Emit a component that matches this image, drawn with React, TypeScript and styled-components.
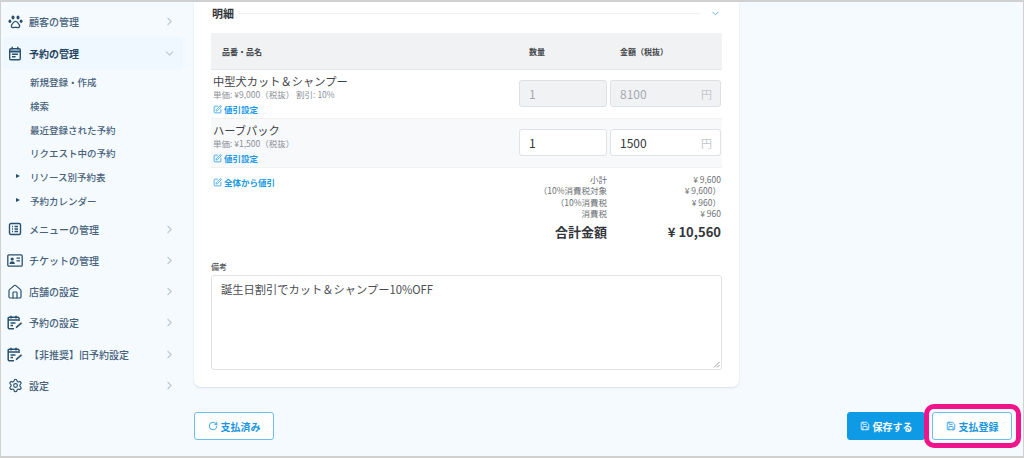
import React from "react";
import styled, { createGlobalStyle } from "styled-components";
import {
  ChevronRight,
  ChevronDown,
  Home,
  Settings,
  SquarePen,
  Save,
  RotateCw,
} from "lucide-react";

const GlobalStyle = createGlobalStyle`
  html, body {
    margin: 0;
    padding: 0;
    background: #fff;
  }
  * { box-sizing: border-box; }
`;

const Frame = styled.div`
  width: 1024px;
  height: 458px;
  overflow: hidden;
  position: relative;
  display: flex;
  background: #f5faff;
  border-top: 2px solid #d0d0d0;
  border-left: 1px solid #d0d0d0;
  border-right: 1px solid #d0d0d0;
  border-bottom: 2px solid #d0d0d0;
  font-family: "Noto Sans CJK JP", "Noto Sans", sans-serif;
  color: #3c3f44;
`;

const Sidebar = styled.nav`
  width: 193px;
  flex: none;
  padding-top: 4px;
  padding-left: 1px;
  display: flex;
  flex-direction: column;
`;

const MenuRow = styled.div<{ $active?: boolean }>`
  width: 181px;
  height: ${(p) => (p.$active ? "32px" : "31.3px")};
  display: flex;
  align-items: center;
  padding-left: 5px;
  border-radius: 4px;
  background: ${(p) => (p.$active ? "#eff8ff" : "transparent")};
  color: ${(p) => (p.$active ? "#24445f" : "#47627a")};
  font-size: 10px;
  font-weight: ${(p) => (p.$active ? 700 : 500)};
`;

const MenuIcon = styled.span`
  width: 16px;
  height: 16px;
  margin-right: 6px;
  color: #28506e;
  display: flex;
  align-items: center;
  justify-content: center;
  flex: none;
`;

const MenuLabel = styled.span`
  flex: 1;
  white-space: nowrap;
`;

const MenuArrow = styled.span`
  color: #bcc8d1;
  display: flex;
  margin-right: 7px;
`;

const SubList = styled.div`
  display: flex;
  flex-direction: column;
  padding: 1px 0 1px;
`;

const SubItem = styled.div`
  height: 23.7px;
  display: flex;
  align-items: center;
  padding-left: 28px;
  position: relative;
  font-size: 9.5px;
  font-weight: 500;
  color: #47627a;
`;

const Caret = styled.span`
  position: absolute;
  left: 14px;
  top: 9px;
  border-left: 4px solid #28506e;
  border-top: 2.5px solid transparent;
  border-bottom: 2.5px solid transparent;
`;

const Main = styled.main`
  flex: 1;
  display: flex;
  flex-direction: column;
  min-width: 0;
`;

const Card = styled.section`
  width: 545px;
  height: 385px;
  background: #fff;
  border-radius: 0 0 7px 7px;
  box-shadow: 0 1px 2px rgba(40, 70, 100, 0.14);
  padding: 0 17px 0 17px;
  display: flex;
  flex-direction: column;
`;

const SectionHead = styled.div`
  height: 31px;
  display: flex;
  align-items: center;
  padding-bottom: 9px;
  font-size: 11px;
  font-weight: 700;
  color: #33363a;
  gap: 5px;
  padding-left: 1px;
`;

const SectionRule = styled.div`
  flex: 1;
  height: 1px;
  background: #eef0f2;
`;

const SectionToggle = styled.span`
  color: #5aaee8;
  display: flex;
  margin: 0 1px 0 5px;
`;

const columns = "308px 91px 112px";

const TableHead = styled.div`
  display: grid;
  grid-template-columns: ${columns};
  height: 37px;
  align-items: center;
  background: #f1f2f4;
  border-bottom: 1px solid #e4e6e9;
  font-size: 8px;
  font-weight: 700;
  color: #44474b;
`;

const HeadCell = styled.div<{ $pad: number }>`
  padding-left: ${(p) => p.$pad}px;
`;

const ItemRow = styled.div<{ $shaded?: boolean }>`
  display: grid;
  grid-template-columns: ${columns};
  height: 49px;
  background: ${(p) => (p.$shaded ? "#f8f9fb" : "#fff")};
  border-bottom: 1px solid #f0f1f3;
`;

const ItemInfo = styled.div`
  padding: 3px 0 0 2px;
  display: flex;
  flex-direction: column;
`;

const ItemName = styled.div`
  font-size: 11.25px;
  line-height: 16px;
  color: #3f4246;
`;

const ItemMeta = styled.div`
  font-size: 8.5px;
  line-height: 11px;
  color: #8b9096;
  white-space: nowrap;
  margin-bottom: 1px;
`;

const EditLink = styled.div`
  display: flex;
  align-items: center;
  gap: 2px;
  height: 14px;
  font-size: 8.5px;
  font-weight: 700;
  color: #1b9ae6;
  white-space: nowrap;
  margin-top: 1px;
`;

const FieldCell = styled.div`
  padding: 10px 0 0 0;
  display: flex;
  justify-content: flex-start;
`;

const Field = styled.div<{ $disabled?: boolean; $w: number }>`
  width: ${(p) => p.$w}px;
  height: 27px;
  border-radius: 3px;
  border: 1px solid ${(p) => (p.$disabled ? "#dde0e4" : "#dfe2e6")};
  background: ${(p) => (p.$disabled ? "#f1f2f4" : "#fff")};
  color: ${(p) => (p.$disabled ? "#a4a9af" : "#33363a")};
  display: flex;
  align-items: center;
  justify-content: space-between;
  padding: 0 8px 0 9px;
  font-size: 12px;
`;

const Unit = styled.span`
  color: #c2c6cb;
  font-size: 11px;
`;

const SummaryWrap = styled.div`
  display: flex;
  justify-content: space-between;
  padding: 6px 1px 0 2px;
  height: 87px;
`;

const Summary = styled.div`
  display: flex;
  flex-direction: column;
  width: 210px;
  margin-top: -1px;
`;

const SummaryRow = styled.div<{ $total?: boolean }>`
  display: grid;
  grid-template-columns: 96px 1fr;
  justify-content: space-between;
  height: ${(p) => (p.$total ? "27px" : "11.3px")};
  align-items: center;
  text-align: right;
  font-size: ${(p) => (p.$total ? "13px" : "8.5px")};
  font-weight: ${(p) => (p.$total ? 700 : 400)};
  color: ${(p) => (p.$total ? "#33363a" : "#6c7176")};
  white-space: nowrap;
`;

const NoteLabel = styled.div`
  font-size: 8px;
  font-weight: 500;
  color: #55595e;
  line-height: 12px;
  margin-top: 6px;
  margin-bottom: 2px;
`;

const NoteBox = styled.div`
  position: relative;
  height: 95px;
  width: 511px;
  border: 1px solid #e0e3e6;
  border-radius: 3px;
  padding: 4px 9px;
  font-size: 11.25px;
  line-height: 18px;
  color: #4a4d52;
`;

const ResizeGrip = styled.svg`
  position: absolute;
  right: 1px;
  bottom: 1px;
`;

const Footer = styled.div`
  width: 818px;
  display: flex;
  justify-content: space-between;
  align-items: center;
  padding-top: 25px;
`;

const ButtonGroup = styled.div`
  display: flex;
  gap: 7px;
`;

const Button = styled.div<{ $solid?: boolean; $w: number }>`
  width: ${(p) => p.$w}px;
  height: 28px;
  border-radius: 3px;
  display: flex;
  align-items: center;
  justify-content: center;
  gap: 3px;
  font-size: 10px;
  font-weight: 700;
  background: ${(p) => (p.$solid ? "#0f9ae6" : "#fff")};
  color: ${(p) => (p.$solid ? "#fff" : "#1b96e2")};
  border: 1px solid ${(p) => (p.$solid ? "#0f9ae6" : "#6cbdf0")};
`;

const Highlight = styled.div`
  position: absolute;
  left: 923px;
  top: 402px;
  width: 97px;
  height: 44px;
  border: 5px solid #f0148c;
  border-radius: 10px;
  pointer-events: none;
`;

// drawn by hand, lucide's versions are too thin or have other shapes
const PawIcon = () => (
  <svg width="15" height="14" viewBox="0 0 15 14" fill="currentColor">
    <ellipse cx="5" cy="2.6" rx="1.5" ry="2" />
    <ellipse cx="10" cy="2.6" rx="1.5" ry="2" />
    <ellipse cx="1.9" cy="6.2" rx="1.4" ry="1.8" />
    <ellipse cx="13.1" cy="6.2" rx="1.4" ry="1.8" />
    <path
      d="M7.5 6.4c1.6 0 2.4 1.3 3.2 2.5.8 1 1.2 1.6.9 2.6-.3.9-1.2 1.3-2.3 1.1-.7-.1-1.2-.3-1.8-.3s-1.1.2-1.8.3c-1.1.2-2-.2-2.3-1.1-.3-1 .1-1.6.9-2.6.8-1.2 1.6-2.5 3.2-2.5z"
      fill="none"
      stroke="currentColor"
      strokeWidth="1.3"
    />
  </svg>
);

const CalendarIcon = () => (
  <svg width="14" height="15" viewBox="0 0 14 15" fill="none" stroke="currentColor" strokeWidth="1.4">
    <rect x="1.7" y="2.7" width="10.6" height="11" rx="1.3" />
    <path d="M1.7 5.5h10.6" strokeWidth="2" />
    <path d="M4.2.8v2.6M9.8.8v2.6M4 8.2h6M4 10.8h3.6" />
  </svg>
);

const MenuListIcon = () => (
  <svg width="14" height="14" viewBox="0 0 14 14" fill="none" stroke="currentColor" strokeWidth="1.4">
    <rect x="1.5" y="1.5" width="11" height="11" rx="1.5" />
    <path d="M4 4.5h1M4 7h1M4 9.5h1M6.5 4.5H10M6.5 7H10M6.5 9.5H10" />
  </svg>
);

const TicketIcon = () => (
  <svg width="16" height="13" viewBox="0 0 16 13" fill="none" stroke="currentColor" strokeWidth="1.3">
    <rect x="0.8" y="0.8" width="14.4" height="11.4" rx="1.2" />
    <circle cx="5.2" cy="5" r="1.6" fill="currentColor" stroke="none" />
    <path d="M2.6 10c0-1.8 1.2-2.7 2.6-2.7s2.6.9 2.6 2.7z" fill="currentColor" stroke="none" />
    <path d="M9.5 4.2h3.5M9.5 6.8h3.5" />
  </svg>
);

const CalendarEditIcon = () => (
  <svg width="16" height="15" viewBox="0 0 16 15" fill="none" stroke="currentColor" strokeWidth="1.5">
    <path d="M12 6V3.2a1 1 0 0 0-1-1H2.2a1 1 0 0 0-1 1v9.6a1 1 0 0 0 1 1H7" />
    <path d="M4 .8v2.6M9 .8v2.6M1.5 5h10M3.5 8h5M3.5 10.6h2.5" />
    <path d="M8.6 13.6l.5-2 5-4.4 1 1.2-5 4.4z" fill="currentColor" stroke="none" />
  </svg>
);

const subItems = [
  { label: "新規登録・作成" },
  { label: "検索" },
  { label: "最近登録された予約" },
  { label: "リクエスト中の予約" },
  { label: "リソース別予約表", caret: true },
  { label: "予約カレンダー", caret: true },
];

const lowerMenu = [
  { label: "メニューの管理", icon: <MenuListIcon /> },
  { label: "チケットの管理", icon: <TicketIcon /> },
  { label: "店舗の設定", icon: <Home size={16} strokeWidth={1.8} /> },
  { label: "予約の設定", icon: <CalendarEditIcon /> },
  { label: "【非推奨】旧予約設定", icon: <CalendarEditIcon /> },
  { label: "設定", icon: <Settings size={15} strokeWidth={1.8} /> },
];

const summaryRows = [
  ["小計", "¥ 9,600"],
  ["（10%消費税対象", "¥ 9,600）"],
  ["（10%消費税", "¥ 960）"],
  ["消費税", "¥ 960"],
];

const App = () => {
  return (
    <Frame>
      <GlobalStyle />
      <Sidebar>
        <MenuRow>
          <MenuIcon>
            <PawIcon />
          </MenuIcon>
          <MenuLabel>顧客の管理</MenuLabel>
          <MenuArrow>
            <ChevronRight size={13} />
          </MenuArrow>
        </MenuRow>
        <MenuRow $active>
          <MenuIcon>
            <CalendarIcon />
          </MenuIcon>
          <MenuLabel>予約の管理</MenuLabel>
          <MenuArrow>
            <ChevronDown size={13} />
          </MenuArrow>
        </MenuRow>
        <SubList>
          {subItems.map((item) => (
            <SubItem key={item.label}>
              {item.caret && <Caret />}
              {item.label}
            </SubItem>
          ))}
        </SubList>
        {lowerMenu.map((item) => (
          <MenuRow key={item.label}>
            <MenuIcon>{item.icon}</MenuIcon>
            <MenuLabel>{item.label}</MenuLabel>
            <MenuArrow>
              <ChevronRight size={13} />
            </MenuArrow>
          </MenuRow>
        ))}
      </Sidebar>
      <Main>
        <Card>
          <SectionHead>
            明細
            <SectionRule />
            <SectionToggle>
              <ChevronDown size={11} />
            </SectionToggle>
          </SectionHead>
          <TableHead>
            <HeadCell $pad={11}>品番・品名</HeadCell>
            <HeadCell $pad={10}>数量</HeadCell>
            <HeadCell $pad={10}>金額（税抜）</HeadCell>
          </TableHead>
          <ItemRow>
            <ItemInfo>
              <ItemName>中型犬カット＆シャンプー</ItemName>
              <ItemMeta>単価: ¥9,000（税抜） 割引: 10%</ItemMeta>
              <EditLink>
                <SquarePen size={9} />
                値引設定
              </EditLink>
            </ItemInfo>
            <FieldCell>
              <Field $disabled $w={88}>
                1
              </Field>
            </FieldCell>
            <FieldCell>
              <Field $disabled $w={111}>
                8100
                <Unit>円</Unit>
              </Field>
            </FieldCell>
          </ItemRow>
          <ItemRow $shaded>
            <ItemInfo>
              <ItemName>ハーブパック</ItemName>
              <ItemMeta>単価: ¥1,500（税抜）</ItemMeta>
              <EditLink>
                <SquarePen size={9} />
                値引設定
              </EditLink>
            </ItemInfo>
            <FieldCell>
              <Field $w={88}>1</Field>
            </FieldCell>
            <FieldCell>
              <Field $w={111}>
                1500
                <Unit>円</Unit>
              </Field>
            </FieldCell>
          </ItemRow>
          <SummaryWrap>
            <EditLink>
              <SquarePen size={9} />
              全体から値引
            </EditLink>
            <Summary>
              {summaryRows.map(([label, value]) => (
                <SummaryRow key={label}>
                  <span>{label}</span>
                  <span>{value}</span>
                </SummaryRow>
              ))}
              <SummaryRow $total>
                <span>合計金額</span>
                <span>¥ 10,560</span>
              </SummaryRow>
            </Summary>
          </SummaryWrap>
          <NoteLabel>備考</NoteLabel>
          <NoteBox>
            誕生日割引でカット＆シャンプー10%OFF
            <ResizeGrip width="7" height="7" viewBox="0 0 7 7" stroke="#9a9da1" fill="none">
              <path d="M1 6.5L6.5 1M4 6.5L6.5 4" />
            </ResizeGrip>
          </NoteBox>
        </Card>
        <Footer>
          <Button $w={80}>
            <RotateCw size={10} />
            支払済み
          </Button>
          <ButtonGroup>
            <Button $solid $w={78}>
              <Save size={10} />
              保存する
            </Button>
            <Button $w={80}>
              <Save size={10} />
              支払登録
            </Button>
          </ButtonGroup>
        </Footer>
      </Main>
      <Highlight />
    </Frame>
  );
};

export default App;
